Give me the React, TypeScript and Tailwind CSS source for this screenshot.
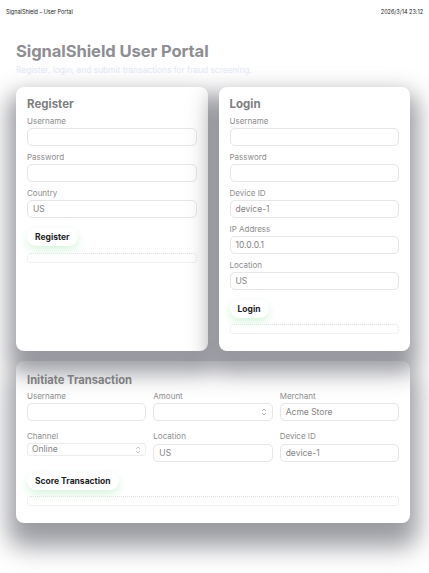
import React from "react";

const font = { fontFamily: "Inter, 'Noto Sans', sans-serif" };

function Field({ label, value, mb = "mb-[2px]" }: { label: string; value?: string; mb?: string }) {
  return (
    <div className="flex flex-col">
      <div className={`text-[8px] leading-[10px] text-[#8d8d8d] ${mb}`}>{label}</div>
      <div className="h-[18px] rounded-[5px] border border-[#e6e6e6] bg-white flex items-center px-[5px] text-[8.5px] text-[#858585]">
        {value}
      </div>
    </div>
  );
}

function Button({ children }: { children: React.ReactNode }) {
  return (
    <div className="self-start h-[18px] px-[8px] rounded-full bg-white flex items-center text-[8.5px] font-bold text-[#1d1d1f] shadow-[0_4px_8px_rgba(120,220,140,0.28)]">
      {children}
    </div>
  );
}

function Dotted() {
  return <div className="h-[10px] rounded-[4px] border border-dotted border-[#e2e2e2]" />;
}

const Spinner = ({ c = "#9a9a9a" }: { c?: string }) => (
  <svg width="6" height="8" viewBox="0 0 6 8" fill="none" stroke={c} strokeWidth="0.8">
    <path d="M1 3 L3 1 L5 3" />
    <path d="M1 5 L3 7 L5 5" />
  </svg>
);

export default function App() {
  return (
    <div className="w-[429px] h-[573px] bg-white relative overflow-hidden" style={font}>
      <div className="flex justify-between px-[6px] pt-[8px] text-[5.5px] text-[#222]">
        <span>SignalShield – User Portal</span>
        <span>2026/3/14 23:12</span>
      </div>
      <div className="pl-[16px] w-[410px] pt-[25px]">
        <h1 className="text-[16.6px] leading-[20px] font-bold text-[#8e8e93] tracking-[-0.1px]">SignalShield User Portal</h1>
        <p className="text-[8.4px] leading-[12px] text-[#e4e9f7] mt-[3px]">
          Register, login, and submit transactions for fraud screening.
        </p>
        <div className="grid grid-cols-2 gap-[11px] mt-[11px]">
          <div className="h-[264px] rounded-[8px] bg-white shadow-[0_14px_22px_8px_rgba(55,58,70,0.5)] px-[11px] pt-[9px] flex flex-col">
            <h2 className="text-[11.5px] leading-[16px] font-bold text-[#7e7e80] mb-[4px]">Register</h2>
            <div className="flex flex-col gap-[6px]">
              <Field label="Username" />
              <Field label="Password" />
              <Field label="Country" value="US" />
            </div>
            <div className="mt-[10px] flex flex-col gap-[7px]">
              <Button>Register</Button>
              <Dotted />
            </div>
          </div>
          <div className="h-[264px] rounded-[8px] bg-white shadow-[0_14px_22px_8px_rgba(55,58,70,0.5)] px-[11px] pt-[9px] flex flex-col">
            <h2 className="text-[11.5px] leading-[16px] font-bold text-[#7e7e80] mb-[4px]">Login</h2>
            <div className="flex flex-col gap-[6px]">
              <Field label="Username" />
              <Field label="Password" />
              <Field label="Device ID" value="device-1" />
              <Field label="IP Address" value="10.0.0.1" />
              <Field label="Location" value="US" />
            </div>
            <div className="mt-[10px] flex flex-col gap-[6px]">
              <Button>Login</Button>
              <Dotted />
            </div>
          </div>
        </div>
        <div className="mt-[10px] h-[162px] rounded-[8px] bg-white shadow-[0_16px_24px_8px_rgba(55,58,70,0.5)] px-[11px] pt-[11px] flex flex-col">
          <h2 className="text-[11.2px] leading-[16px] font-bold text-[#7e7e80] mb-[3px]">Initiate Transaction</h2>
          <div className="grid grid-cols-3 gap-x-[7px] gap-y-[10px]">
            <Field label="Username" />
            <div className="flex flex-col">
              <div className="text-[8px] leading-[10px] text-[#8d8d8d] mb-[2px]">Amount</div>
              <div className="h-[18px] rounded-[5px] border border-[#e6e6e6] bg-white flex items-center justify-end px-[5px]">
                <Spinner />
              </div>
            </div>
            <Field label="Merchant" value="Acme Store" />
            <div className="flex flex-col">
              <div className="text-[8px] leading-[10px] text-[#8d8d8d] mb-[2px]">Channel</div>
              <div className="h-[13px] rounded-[3px] border border-[#ececec] bg-white flex items-center justify-between px-[4px] text-[8.5px] text-[#858585]">
                <span>Online</span>
                <Spinner c="#b8b8b8" />
              </div>
            </div>
            <Field label="Location" value="US" mb="mb-[3px]" />
            <Field label="Device ID" value="device-1" mb="mb-[3px]" />
          </div>
          <div className="mt-[10px] flex flex-col gap-[6px]">
            <Button>Score Transaction</Button>
            <Dotted />
          </div>
        </div>
      </div>
    </div>
  );
}
